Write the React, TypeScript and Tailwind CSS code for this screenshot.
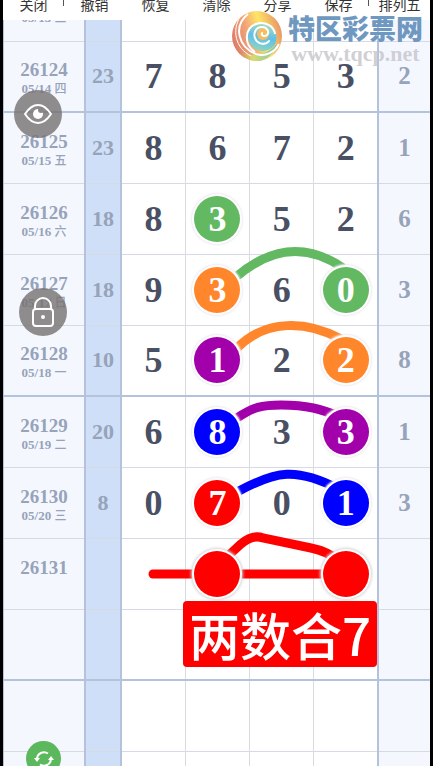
import clsx from "clsx";

type Mark = "green" | "orange" | "purple" | "blue" | "red";

interface Draw {
  period: string;
  date: string;
  sum: string;
  digits: string[];
  marks?: (Mark | null)[];
  last: string;
  thick?: boolean;
}

const draws: Draw[] = [
  { period: "", date: "05/13 三", sum: "", digits: ["", "", "", ""], last: "" },
  { period: "26124", date: "05/14 四", sum: "23", digits: ["7", "8", "5", "3"], last: "2", thick: true },
  { period: "26125", date: "05/15 五", sum: "23", digits: ["8", "6", "7", "2"], last: "1" },
  { period: "26126", date: "05/16 六", sum: "18", digits: ["8", "3", "5", "2"], marks: [null, "green", null, null], last: "6" },
  { period: "26127", date: "05/17 日", sum: "18", digits: ["9", "3", "6", "0"], marks: [null, "orange", null, "green"], last: "3" },
  { period: "26128", date: "05/18 一", sum: "10", digits: ["5", "1", "2", "2"], marks: [null, "purple", null, "orange"], last: "8", thick: true },
  { period: "26129", date: "05/19 二", sum: "20", digits: ["6", "8", "3", "3"], marks: [null, "blue", null, "purple"], last: "1" },
  { period: "26130", date: "05/20 三", sum: "8", digits: ["0", "7", "0", "1"], marks: [null, "red", null, "blue"], last: "3" },
  { period: "26131", date: "", sum: "", digits: ["", "", "", ""], marks: [null, "red", null, "red"], last: "" },
  { period: "", date: "", sum: "", digits: ["", "", "", ""], last: "", thick: true },
  { period: "", date: "", sum: "", digits: ["", "", "", ""], last: "" },
  { period: "", date: "", sum: "", digits: ["", "", "", ""], last: "" },
];

const markColors: Record<Mark, string> = {
  green: "bg-[#62b962]",
  orange: "bg-[#ff862b]",
  purple: "bg-[#a200aa]",
  blue: "bg-[#0000ff]",
  red: "bg-[#ff0000]",
};

const tools = ["关闭", "撤销", "恢复", "清除", "分享", "保存", "排列五"];

const Toolbar = () => (
  <header className="relative z-20 flex h-5 shrink-0 items-end overflow-hidden bg-white pb-[6px]">
    {tools.map((tool, i) => (
      <button
        key={tool}
        type="button"
        className="relative flex-1 whitespace-nowrap text-center text-sm leading-5 text-[#333333]"
      >
        {tool}
        {(i === 0 || i === 5) && <span className="absolute right-0 bottom-2 h-3 w-px bg-[#555555]" />}
      </button>
    ))}
  </header>
);

const Watermark = () => (
  <div className="pointer-events-none absolute top-[10px] right-[7px] z-30 flex items-start gap-[5px]">
    <svg viewBox="0 0 52 52" className="size-[52px]" aria-hidden="true">
      <defs>
        <linearGradient id="outer" x1="0" y1="0.6" x2="1" y2="0.3">
          <stop offset="0" stopColor="#dd7a68" />
          <stop offset="0.35" stopColor="#f3a878" />
          <stop offset="0.6" stopColor="#ffe566" />
          <stop offset="1" stopColor="#e58f68" />
        </linearGradient>
        <linearGradient id="base" x1="0" y1="0" x2="1" y2="0">
          <stop offset="0" stopColor="#d9765f" />
          <stop offset="0.4" stopColor="#d8dc6c" />
          <stop offset="1" stopColor="#72c7c0" />
        </linearGradient>
        <linearGradient id="ring" x1="0.6" y1="0" x2="0.4" y2="1">
          <stop offset="0" stopColor="#b8e0b0" />
          <stop offset="0.5" stopColor="#5fc0e8" />
          <stop offset="1" stopColor="#8fd5c0" />
        </linearGradient>
      </defs>
      <circle cx="26" cy="26" r="25" fill="url(#outer)" />
      <path d="M6 40c13 8 29 6 40-6-3 10-11 17-20 17-9 0-16-5-20-11z" fill="url(#base)" />
      <path d="M19 19C23 11 35 10 41 16c6 7 6 16 0 22-6 4-13 4-18 0-6-5-8-12-4-19z" fill="url(#ring)" />
      <path d="M17 4C2 16 7 37 25 44c10 3 19-2 23-10" stroke="#fff" strokeWidth="2" fill="none" />
      <path d="M9 7C1 20 4 38 20 46" stroke="#fff" strokeWidth="1" fill="none" />
      <path d="M24 42C12 34 14 18 25 14c9-3 18 2 19 10" stroke="#fff" strokeWidth="2" fill="none" />
      <circle cx="32" cy="24" r="6" fill="#f8bd62" />
      <path d="M31 23c-1 3 3 4 5 2 3-3 0-8-5-8-6 0-9 6-7 11 2 6 10 8 14 3" stroke="#fff" strokeWidth="2" fill="none" strokeLinecap="round" />
    </svg>
    <div className="flex flex-col pt-1">
      <span className="font-['Noto_Sans_CJK_SC',sans-serif] text-[27px] leading-7 font-black text-[#6f98c1]">特区彩票网</span>
      <span className="text-center font-['Liberation_Serif',serif] text-[22px] leading-6 font-bold text-[#c4c4c8]/80">www.tqcp.net</span>
    </div>
  </div>
);

const Strokes = () => (
  <svg
    viewBox="0 0 257 852"
    preserveAspectRatio="none"
    className="pointer-events-none absolute top-px right-[52px] left-[117px] h-[852px] w-[calc(100%-169px)]"
    fill="none"
    strokeWidth="9"
    aria-hidden="true"
  >
    <path d="M115 306C150 276 186 272 222 297" stroke="#62b962" />
    <path d="M115 378C145 347 186 350 220 368" stroke="#ff862b" />
    <path d="M116 447C132 436 141 434 160 434C186 434 200 438 220 446" stroke="#a200aa" />
    <path d="M118 520C155 500 175 496 218 518" stroke="#0000ff" />
    <path d="M108 584L120 573Q132 563 142 567L190 577Q206 580 220 591" stroke="#ff0000" />
    <path d="M32 603H222" stroke="#ff0000" strokeLinecap="round" />
  </svg>
);

const Trend = () => (
  <div className="relative -mt-[50px]">
    <table className="w-full table-fixed border-collapse font-['Liberation_Serif','Noto_Sans_CJK_SC',serif] font-bold text-[#96a3b9]">
      <colgroup>
        <col className="w-[81px]" />
        <col className="w-9" />
        <col />
        <col />
        <col />
        <col />
        <col className="w-[52px]" />
      </colgroup>
      <tbody>
        {draws.map((draw, row) => (
          <tr
            key={row}
            className={clsx("h-[71px]", draw.thick ? "border-b-2 border-b-[#b3c3dc]" : "border-b border-b-[#d6dae3]")}
          >
            <th scope="row" className="border-r-2 border-r-[#b5c2dc] bg-[#f5f7ff] p-0 pt-1 text-center">
              <div className="h-5 text-[19px] leading-5">{draw.period}</div>
              <div className="h-4 text-[13px] leading-4">
                {draw.date.slice(0, 6)}
                <span className="font-['Noto_Sans_CJK_SC',sans-serif] text-xs leading-4 font-medium">{draw.date.slice(6)}</span>
              </div>
            </th>
            <td className="border-r-2 border-r-[#b5c2dc] bg-[#cfdff7] p-0 text-center text-[22px] leading-6">{draw.sum}</td>
            {draw.digits.map((digit, i) => {
              const mark = draw.marks?.[i];
              return (
                <td
                  key={i}
                  className={clsx(
                    "p-0 text-[36px] leading-[46px] text-[#4a5064]",
                    i === 3 ? "border-r-2 border-r-[#b5c2dc]" : "border-r border-r-[#d9dbe1]",
                  )}
                >
                  <div
                    className={clsx(
                      "relative mx-auto size-[46px] rounded-full text-center",
                      mark && "z-10 text-white",
                      mark && (digit ? "shadow-[0_0_0_2px_#fff,0_0_2px_3px_#efeaf1]" : "shadow-[0_0_0_2px_#fff,0_0_3px_3px_#d4d4d8]"),
                      mark && markColors[mark],
                    )}
                  >
                    {digit}
                  </div>
                </td>
              );
            })}
            <td className="bg-[#f5f7ff] p-0 text-center text-[25px] leading-7">{draw.last}</td>
          </tr>
        ))}
      </tbody>
    </table>
    <Strokes />
    <div className="absolute top-[631px] right-[53px] z-10 rounded-[4px] bg-[#ff0000] px-[6px] font-['Noto_Sans_CJK_SC',sans-serif] text-[51px] leading-[66px] font-medium text-white">
      两数合7
    </div>
  </div>
);

export default function App() {
  return (
    <div className="relative flex h-screen flex-col overflow-hidden border-x-3 border-black bg-white font-['Noto_Sans_CJK_SC',sans-serif]">
      <Toolbar />
      <main className="min-h-0 flex-1 overflow-hidden border-l border-[#b5c2dc]">
        <Trend />
      </main>
      <Watermark />

      {/* Floating controls */}
      <button
        type="button"
        aria-label="显示"
        className="absolute top-[90px] left-[11px] z-20 flex size-12 items-center justify-center rounded-full bg-[#757171]/80"
      >
        <svg viewBox="0 0 30 24" className="h-6 w-[30px]" fill="none" stroke="#fff" strokeWidth="2">
          <path d="M2 12C6 6 10 3 15 3s9 3 13 9c-4 6-8 9-13 9S6 18 2 12z" strokeLinejoin="round" />
          <circle cx="15" cy="12" r="5" fill="#fff" stroke="none" />
          <circle cx="18" cy="8" r="3" fill="#8a8789" stroke="none" />
        </svg>
      </button>
      <button
        type="button"
        aria-label="锁定"
        className="absolute top-[288px] left-[16px] z-20 flex size-12 items-center justify-center rounded-full bg-[#757171]/80"
      >
        <svg viewBox="0 0 24 32" className="h-8 w-6" fill="none" stroke="#fff" strokeWidth="2">
          <rect x="2" y="13" width="20" height="17" rx="3" />
          <path d="M4 13V10a8 8 0 0 1 16 0v3" />
          <circle cx="12" cy="21" r="2" fill="#fff" stroke="none" />
        </svg>
      </button>
      <button
        type="button"
        aria-label="刷新"
        className="absolute -bottom-[10px] left-[23px] z-20 flex size-[35px] items-center justify-center rounded-full bg-[#5cb85c]"
      >
        <svg viewBox="0 0 20 16" className="h-4 w-5" fill="none" stroke="#fff" strokeWidth="2">
          <path d="M3 8a7 7 0 0 1 11-5.500M17 8a7 7 0 0 1-11 5.500" />
          <path d="M0 7h6L3 11zM14 9h6l-3-4z" fill="#fff" stroke="none" />
        </svg>
      </button>
    </div>
  );
}
